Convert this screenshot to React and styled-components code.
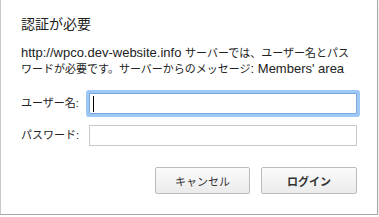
import styled, { createGlobalStyle } from 'styled-components'

const Global = createGlobalStyle`
html, body {
  margin: 0;
  padding: 0;
  background: #ffffff;
}
body {
  font-family: "Liberation Sans", "Noto Sans CJK JP", sans-serif;
  color: #222222;
}
`

const Dialog = styled.div`
box-sizing: border-box;
width: 378px;
height: 215px;
padding: 16px 20px 0 20px;
background: #ffffff;
border-left: 1px solid #c9c9c9;
border-right: 1px solid #a9a9a9;
border-bottom: 1px solid #a9a9a9;
box-shadow: 0 1px 2px rgba(0, 0, 0, 0.2);
display: flex;
flex-direction: column;
`

const Title = styled.h1`
margin: 0;
font-weight: normal;
font-size: 14px;
line-height: 16px;
color: #222222;
`

const Message = styled.p`
margin: 13px 0 0 0;
font-size: 13px;
line-height: 16px;
`

const Ja = styled.span`
font-size: 11px;
`

const Form = styled.div`
margin-top: 16px;
display: grid;
grid-template-columns: 68px 268px;
row-gap: 11px;
align-items: center;
`

const Label = styled.label`
font-size: 11px;
line-height: 21px;
color: #222222;
`

const Field = styled.div`
position: relative;
box-sizing: border-box;
height: 21px;
border: 1px solid ${p => (p.focused ? '#7aa7dc' : '#c8c8c8')};
border-radius: ${p => (p.focused ? '1px' : '0')};
box-shadow: ${p => (p.focused ? '0 0 0 3px #9ec8f6' : 'none')};
background: #ffffff;
`

const Caret = styled.span`
position: absolute;
left: 3px;
top: 2px;
width: 1px;
height: 16px;
background: #000000;
`

const Actions = styled.div`
margin-top: 21px;
display: flex;
justify-content: flex-end;
gap: 11px;
`

const Button = styled.button`
box-sizing: border-box;
width: ${p => (p.primary ? '96px' : '95px')};
height: 27px;
padding: 0;
border: 1px solid #bcbcbc;
border-radius: 2px;
background: linear-gradient(#fbfbfb, #ebebeb);
font-family: "Liberation Sans", "Noto Sans CJK JP", sans-serif;
font-size: 11px;
font-weight: ${p => (p.primary ? 'bold' : 'normal')};
color: #333333;
`

export default function App() {
  return (
    <>
      <Global />
      <Dialog>
        <Title>認証が必要</Title>
        <Message>
          http://wpco.dev-website.info <Ja>サーバーでは、ユーザー名とパス</Ja>
          <br />
          <Ja>ワードが必要です。サーバーからのメッセージ</Ja>: Members' area
        </Message>
        <Form>
          <Label>ユーザー名:</Label>
          <Field focused>
            <Caret />
          </Field>
          <Label>パスワード:</Label>
          <Field />
        </Form>
        <Actions>
          <Button>キャンセル</Button>
          <Button primary>ログイン</Button>
        </Actions>
      </Dialog>
    </>
  )
}
